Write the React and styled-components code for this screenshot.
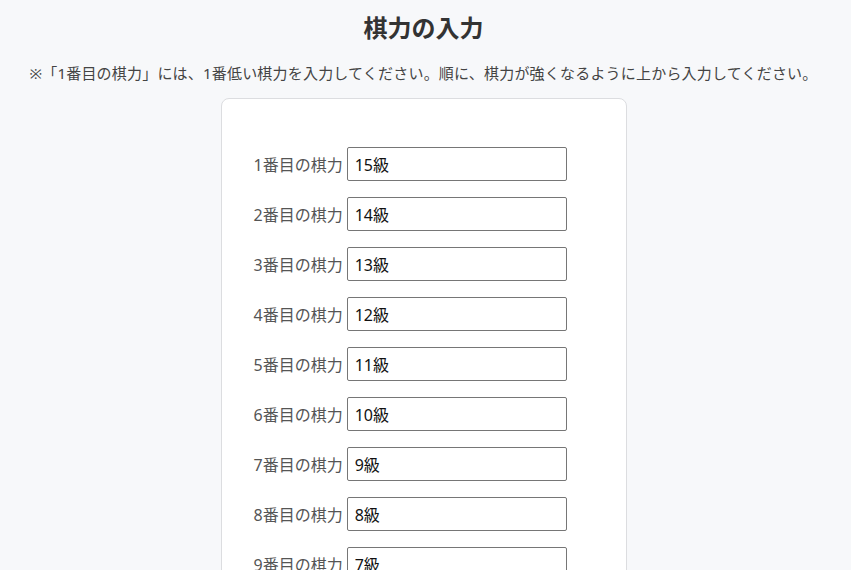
import React from "react";
import styled, { createGlobalStyle } from "styled-components";

const Global = createGlobalStyle`
  html, body { margin: 0; padding: 0; background: #f7f8fa; overflow: hidden; }
  body { font-family: "Noto Sans", "Noto Sans CJK JP", sans-serif; }
`;

const Page = styled.main`
  display: flex;
  flex-direction: column;
  align-items: center;
  padding: 10px 4px 0 0;
`;

const Title = styled.h1`
  margin: 0;
  font-size: 24px;
  line-height: 36px;
  font-weight: 700;
  color: #333;
`;

const Note = styled.p`
  margin: 16px 0 0;
  font-size: 15px;
  line-height: 22px;
  letter-spacing: 0.2px;
  color: #444;
`;

const Card = styled.section`
  margin-top: 14px;
  width: 406px;
  box-sizing: border-box;
  background: #fff;
  border: 1px solid #dcdde0;
  border-radius: 8px;
  padding: 48px 32px 32px 32px;
  display: flex;
  flex-direction: column;
  gap: 16px;
`;

const Row = styled.div`
  display: flex;
  align-items: center;
  gap: 4px;
`;

const Label = styled.label`
  font-size: 16px;
  color: #555;
  white-space: nowrap;
`;

const Input = styled.input`
  width: 220px;
  height: 34px;
  box-sizing: border-box;
  border: 1px solid #767676;
  border-radius: 2px;
  padding: 0 7px;
  font-family: "Noto Sans", "Noto Sans CJK JP", sans-serif;
  font-size: 16px;
  color: #111;
  background: #fff;
`;

const values = ["15級", "14級", "13級", "12級", "11級", "10級", "9級", "8級", "7級", "6級", "5級"];

export default function App() {
  return (
    <>
      <Global />
      <Page>
        <Title>棋力の入力</Title>
        <Note>
          ※「1番目の棋力」には、1番低い棋力を入力してください。順に、棋力が強くなるように上から入力してください。
        </Note>
        <Card>
          {values.map((v, i) => (
            <Row key={i}>
              <Label htmlFor={`r${i}`}>{i + 1}番目の棋力</Label>
              <Input id={`r${i}`} defaultValue={v} />
            </Row>
          ))}
        </Card>
      </Page>
    </>
  );
}
